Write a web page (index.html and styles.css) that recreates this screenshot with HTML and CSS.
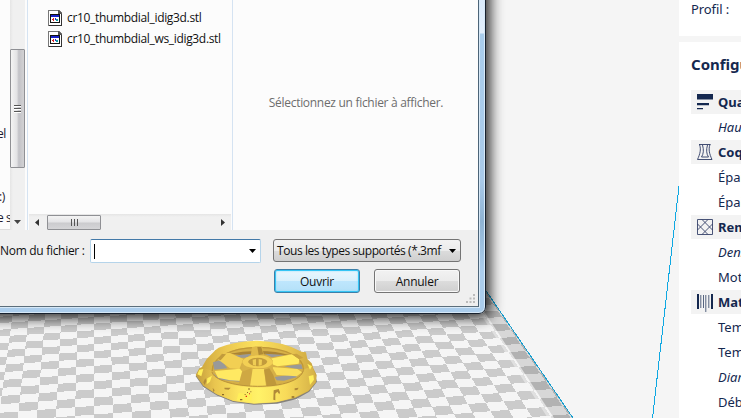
FILE: index.html
```html
<!DOCTYPE html>
<html lang="fr">
<head>
    <meta charset="UTF-8">
    <meta name="viewport" content="width=device-width, initial-scale=1">
    <title>Ouvrir un fichier</title>
    <link rel="stylesheet" href="styles.css">
</head>
<body>

<div class="workspace">
    <svg class="scene" width="741" height="418" viewBox="0 0 741 418">
        <defs>
            <linearGradient id="rim" x1="0" x2="1" y1="0" y2="0">
                <stop offset="0" stop-color="#c9a23b"/>
                <stop offset=".25" stop-color="#ecc850"/>
                <stop offset=".5" stop-color="#fbe15d"/>
                <stop offset=".8" stop-color="#e6c24e"/>
                <stop offset="1" stop-color="#c7a23d"/>
            </linearGradient>
            <linearGradient id="skirt" x1="0" x2="1" y1="0" y2="0">
                <stop offset="0" stop-color="#c59e3c"/>
                <stop offset=".15" stop-color="#e9c54f"/>
                <stop offset=".35" stop-color="#fce45f"/>
                <stop offset=".52" stop-color="#fff268"/>
                <stop offset=".75" stop-color="#f8da59"/>
                <stop offset="1" stop-color="#d4b047"/>
            </linearGradient>
        </defs>
        <path id="tiles" fill="#cbcbcb" shape-rendering="crispEdges"/>
        <path id="margin" fill="#000" fill-opacity=".12"/>
        <path id="marginSoft" fill="#f5f5f5" fill-opacity=".5"/>
        <path id="edge" stroke="#189fd0" fill="none" shape-rendering="crispEdges"/>
        <path d="M679 186L652.5 418" stroke="#0fa8e2" fill="none" shape-rendering="crispEdges"/>

        <!-- thumb dial -->
        <g transform="translate(180 325) scale(.33333)">
            <path d="M47 154L70 186 110 211 160 231 222 239 292 236 348 223 388 200 411 170 405 150 60 140z" fill="#85827c"/>
            <path fill="url(#rim)" d="M47 150L58 130 66 126 80 102 106 76 116 68Q160 50 232 47Q310 49 365 80L378 82 382 102 395 115 400 130 410 150 408 172 386 198 346 218 290 232 222 236 160 228 110 208 70 182z"/>
            <path fill="#d6b047" d="M96 140C92 98 150 66 235 66C325 68 374 101 371 136C366 163 310 184 232 184C156 183 101 163 96 140z"/>
            <path fill="none" stroke="#c09838" stroke-width="4" d="M97 138C95 100 150 68 235 67C325 68 372 101 370 134"/>
            <path fill="#a98334" d="M150 86Q190 78 235 78Q290 78 330 91L300 90 235 87 180 90z"/>
            <path fill="#999" d="M99 112L124 104 142 130 103 134zM158 92L215 86 200 98 182 98zM254 86L314 90 275 97zM312 124L364 118 368 132 345 131zM284 156L340 148 352 156 312 167 290 166zM98 142L108 156 122 164 136 166 180 170 176 162 112 156z"/>
            <path fill="#e0ba4a" d="M216 66L246 64 252 92 212 94z"/>
            <path fill="#b18b35" d="M232 66L244 66 250 88 236 90z"/>
            <path fill="#f2cf53" d="M126 86L148 83 190 102 178 132 150 130 112 102z"/>
            <path fill="#c29b3c" d="M126 86L138 88 122 106 112 102z"/>
            <path fill="#ffea61" d="M270 101L336 88 358 103 356 116 292 124 276 118z"/>
            <path fill="#c9a23f" d="M336 88L358 103 370 98 350 86z"/>
            <path fill="#ffe962" d="M104 138L180 131 192 146 184 168 150 166 114 158z"/>
            <path fill="#fbdf5c" d="M276 126L352 132 366 142 350 154 290 150z"/>
            <path fill="#d8b248" d="M188 105Q198 92 233 91Q268 92 278 106L279 138 266 150 200 150 186 138z"/>
            <path fill="#f3d054" d="M187 112Q190 92 233 91Q275 92 279 114Q270 130 233 130Q193 129 187 112z"/>
            <path fill="#c29b3c" d="M204 111Q208 99 233 98Q258 99 262 110Q256 123 233 124Q212 123 204 111z"/>
            <path fill="#efcd54" d="M218 104L228 102 228 122 219 120zM236 102L246 104 245 121 236 122z"/>
            <path fill="#cfa843" d="M186 140L214 130 218 154 212 182 176 178z"/>
            <path fill="#f9de5c" d="M218 132L252 132 258 184 210 184z"/>
            <path fill="#bf983b" d="M252 134L268 130 280 150 290 180 260 183z"/>
            <path fill="url(#skirt)" d="M50 150L66 128 92 136C98 164 156 187 232 188C316 187 366 165 374 132L396 124 408 154 407 172 384 198 344 217 290 231 222 235 160 227 110 207 70 181z"/>
            <path fill="none" stroke="#b8923a" stroke-width="3" d="M96 141C101 163 156 183 232 184C310 184 362 166 370 136"/>
            <path fill="#ffef5a" d="M58 134L70 132 64 154 52 148zM82 160L96 152 90 170 80 178zM386 154L400 150 402 164 390 180zM382 116L396 124 390 134zM176 204L216 208 214 230 170 226z"/>
            <path fill="#b18a38" d="M133 188L152 188 146 194 134 193zM281 196L296 192 300 202 298 208 292 200 286 206 286 226 280 224zM344 190L356 188 352 195 344 196zM70 172L76 160 79 168 74 180zM98 188L104 196 100 202z"/>
            <path fill="#8d6927" d="M205 190h4v4h-4zM201 201h3v3h-3zM211 199h3v3h-3zM194 207h3v3h-3zM126 207h6v4h-6zM180 222h7v4h-7zM335 214h8v4h-8z"/>
            <path fill="#e22518" d="M197 212h4v4h-4zM207 205h3v3h-3z"/>
        </g>
    </svg>

    <aside class="settings">
        <section class="profile">Profil :</section>
        <section class="config">
            <h2>Configuration</h2>
            <div class="row group">
                <svg width="16" height="16" viewBox="0 0 16 16" fill="#14284f"><path d="M0 0h16v5.500H0zM0 9h12v2.300H0zM0 14h6v1.300H0z"/></svg>
                Qualité
            </div>
            <div class="row changed">Hauteur</div>
            <div class="row group">
                <svg width="16" height="16" viewBox="0 0 16 16" fill="none" stroke="#2c3a63"><path d="M2 .5h11.500M.5 15.500h14.500M2.500 .5c1.800 5 .5 9.500-2 15M13 .5c-1.800 5-.5 9.500 2 15M5.500 1c1.500 5 1 9-1 12h7c-2-3-2.500-7-1-12" stroke-width=".9"/></svg>
                Coque
            </div>
            <div class="row">Épaisseur</div>
            <div class="row">Épaisseur</div>
            <div class="row group">
                <svg width="16" height="16" viewBox="0 0 16 16" fill="none" stroke="#35426a"><path d="M.5 .5h15v15H.5zM5 .5l10.500 10.500M.5 5L11 15.500M11 .5L.5 11M15.500 5L5 15.500" stroke-width=".9"/></svg>
                Remplissage
            </div>
            <div class="row changed">Densité</div>
            <div class="row">Motif</div>
            <div class="row group">
                <svg width="16" height="19" viewBox="0 0 16 19" fill="#14284f"><path d="M0 1h2v15H0zM14 1h2v15h-2z"/><path opacity=".7" d="M3.300 2h1v13h-1zM6 2h1v13H6zM8.300 2h1v17h-1zM11.300 2h1v13h-1z"/></svg>
                Matériau
            </div>
            <div class="row">Température</div>
            <div class="row">Température</div>
            <div class="row changed">Diamètre</div>
            <div class="row">Débit</div>
        </section>
    </aside>
</div>

<div class="dialog">
    <div class="dialog-body">
        <div class="browser">
            <div class="tree">
                <span class="tree-a">el</span>
                <span class="tree-b">:)</span>
                <span class="tree-c">e s</span>
            </div>
            <div class="vscroll">
                <div class="vthumb"><i></i><i></i><i></i></div>
                <svg width="7" height="4" viewBox="0 0 7 4"><path d="M0 0h7L3.500 4z" fill="#444"/></svg>
            </div>
            <div class="files">
                <ul>
                    <li><svg class="file-icon" width="14" height="16" viewBox="0 0 14 16" shape-rendering="crispEdges"><use href="#stl"/></svg><span>cr10_thumbdial_idig3d.stl</span></li>
                    <li><svg class="file-icon" width="14" height="16" viewBox="0 0 14 16" shape-rendering="crispEdges"><use href="#stl"/></svg><span>cr10_thumbdial_ws_idig3d.stl</span></li>
                </ul>
                <div class="hscroll">
                    <svg width="4" height="7" viewBox="0 0 4 7"><path d="M4 0v7L0 3.500z" fill="#333"/></svg>
                    <div class="hthumb"><i></i><i></i><i></i></div>
                    <svg class="end" width="4" height="7" viewBox="0 0 4 7"><path d="M0 0v7L4 3.500z" fill="#333"/></svg>
                </div>
            </div>
            <div class="preview">Sélectionnez un fichier à afficher.</div>
        </div>
        <div class="form">
            <div class="line">
                <label>Nom du fichier :</label>
                <div class="combo"><span class="caret"></span><svg width="7" height="4" viewBox="0 0 7 4"><path d="M0 0h7L3.500 4z"/></svg></div>
                <div class="select"><span>Tous les types supportés (*.3mf</span><svg width="7" height="4" viewBox="0 0 7 4"><path d="M0 0h7L3.500 4z"/></svg></div>
            </div>
            <div class="buttons">
                <button class="btn primary">Ouvrir</button>
                <button class="btn">Annuler</button>
            </div>
            <svg class="grip" width="9" height="9" viewBox="0 0 9 9" fill="#bbb"><path d="M7 0h2v2H7zM3.500 3.500h2v2h-2zM7 3.500h2v2H7zM0 7h2v2H0zM3.500 7h2v2h-2zM7 7h2v2H7z"/></svg>
        </div>
    </div>
</div>

<svg class="symbols" width="0" height="0">
    <symbol id="stl" viewBox="0 0 14 16">
        <path d="M0 0h11l3 3v13H0z" fill="#777"/>
        <path d="M1 1h9v3h3v11H1z" fill="#fff"/>
        <path d="M10 0v4h4v-1z" fill="#555"/>
        <path d="M13 4h1v12H1v-1h12z" fill="#333"/>
        <path d="M2 4h10v9H2z" fill="#111"/>
        <path d="M3 5h8v2H3z" fill="#1a22c8"/>
        <path d="M3 7h8v5H3z" fill="#fff"/>
        <path d="M4 9h2v1H4zM5 8h1v3H5z" fill="#d22"/>
        <path d="M7 8h1v2H7z" fill="#2424d0"/>
        <path d="M8 9h2v2H8z" fill="#13a0a8"/>
    </symbol>
</svg>

<script src="script.js"></script>
</body>
</html>
```
FILE: styles.css
```css
body {
    margin: 0;
    width: 741px;
    height: 418px;
    overflow: hidden;
    position: relative;
    background: #f5f5f5;
    font-family: "Noto Sans", "Open Sans", sans-serif;
}
.workspace {
    display: flex;
    justify-content: flex-end;
    height: 418px;
}
.scene {
    position: absolute;
    left: 0;
    top: 0;
}
.symbols {
    position: absolute;
}

/* settings panel */
.settings {
    width: 62px;
    overflow: hidden;
    color: #14284f;
    font-size: 13px;
    white-space: nowrap;
    position: relative;
}
.profile {
    height: 36px;
    box-sizing: border-box;
    padding: 0 0 0 12px;
    line-height: 18px;
    letter-spacing: -.1px;
    background: #fff;
    margin-bottom: 6px;
}
.config {
    background: #fff;
    height: 376px;
    padding-left: 12px;
}
.config h2 {
    margin: 0;
    height: 48px;
    line-height: 45px;
    font-size: 15px;
    font-weight: bold;
}
.row {
    height: 24px;
    line-height: 25px;
    margin-bottom: 1px;
    padding-left: 27px;
}
.group {
    display: flex;
    align-items: center;
    background: #f3f3f3;
    padding-left: 6px;
    gap: 5px;
    font-weight: bold;
}
.group svg {
    flex: none;
}
.changed {
    font-style: italic;
}

/* file dialog */
.dialog {
    position: absolute;
    left: -20px;
    top: -20px;
    width: 506px;
    height: 334px;
    box-sizing: border-box;
    padding: 0 6px 6px 0;
    border: 1px solid #17212e;
    border-radius: 0 0 7px 7px;
    background: linear-gradient(#d4e8fb 0, #e2effc 52px, #a9cdec 53px, #a9cae9 200px, #8fb3d3 240px, #abcdec 290px);
    box-shadow: inset 0 0 0 1px #d6e8f7, 3px 3px 14px 1px rgba(0, 0, 0, .85);
    font-family: "Open Sans", "Noto Sans", sans-serif;
    font-size: 12px;
    color: #111;
}
.dialog-body {
    height: 326px;
    box-sizing: border-box;
    padding: 19px 0 0 19px;
    border-right: 1px solid #4c6478;
    border-bottom: 1px solid #5c6e7b;
    box-shadow: 1px 1px 0 #d6e8f7;
    background: #efefef;
}
.browser {
    display: flex;
    height: 230px;
    background: #fcfcfc;
}
.tree {
    width: 10px;
    height: 229px;
    overflow: hidden;
    display: flex;
    flex-direction: column;
    line-height: 16px;
    white-space: nowrap;
    color: #1a1a30;
    letter-spacing: -.4px;
    border-bottom: 1px solid #ddd;
}
.tree-a {
    margin: 126px 0 47px -3px;
}
.tree-b {
    margin: 0 0 5px -1px;
}
.tree-c {
    margin-left: -3px;
}
.vscroll {
    width: 15px;
    padding-top: 49px;
    background: linear-gradient(90deg, #e5e5e5, #f0f0f0 3px);
    display: flex;
    flex-direction: column;
    align-items: center;
    gap: 52px;
}
.vthumb {
    width: 13px;
    height: 117px;
    border: 1px solid #8f9094;
    border-radius: 1px;
    background: linear-gradient(90deg, #f4f4f4, #e2e2e4 45%, #c2c2c7 60%, #d2d2d4);
    display: flex;
    flex-direction: column;
    justify-content: center;
    align-items: center;
    gap: 2px;
}
.vthumb i {
    width: 7px;
    height: 1px;
    background: #555;
    border-bottom: 1px solid #fff;
    margin-bottom: -1px;
}
.files {
    width: 204px;
    margin-left: 2px;
    border-left: 1px solid #d5e3f2;
    border-right: 1px solid #d5e3f2;
    display: flex;
    flex-direction: column;
    justify-content: space-between;
}
.files ul {
    list-style: none;
    margin: 0;
    padding: 7px 0 0 20px;
}
.files li {
    display: flex;
    align-items: center;
    height: 21px;
    gap: 5px;
    white-space: nowrap;
    letter-spacing: -.33px;
}
.file-icon {
    flex: none;
}
.hscroll {
    display: flex;
    align-items: center;
    height: 16px;
    margin: 0 1px;
    padding: 0 6px;
    background: linear-gradient(#e5e5e5, #f0f0f0 3px);
}
.hthumb {
    width: 52px;
    height: 13px;
    margin-left: 8px;
    border: 1px solid #8f9094;
    border-radius: 1px;
    background: linear-gradient(#f4f4f4, #e4e4e6 45%, #cbcbce 55%, #d5d5d7);
    display: flex;
    align-items: center;
    justify-content: center;
    gap: 2px;
}
.hthumb i {
    width: 1px;
    height: 7px;
    background: #555;
}
.end {
    margin-left: auto;
}
.preview {
    flex: 1;
    padding: 95px 0 0 1px;
    line-height: 16px;
    text-align: center;
    color: #6d6d6d;
    letter-spacing: -.3px;
    white-space: nowrap;
}
.form {
    height: 75px;
    position: relative;
}
.line {
    display: flex;
    padding-top: 9px;
    height: 24px;
}
.line label {
    width: 90px;
    line-height: 24px;
    letter-spacing: -.3px;
    white-space: nowrap;
}
.combo,
.select {
    display: flex;
    align-items: center;
    justify-content: space-between;
    box-sizing: border-box;
    height: 24px;
    padding: 0 4px 0 3px;
}
.combo {
    width: 171px;
    margin-right: 12px;
    background: #fff;
    border: 1px solid #b5d4ea;
    border-top-color: #4379a8;
    border-radius: 2px;
}
.caret {
    width: 1px;
    height: 15px;
    background: #000;
}
.select {
    width: 188px;
    height: 23px;
    border: 1px solid #747474;
    border-radius: 3px;
    background: linear-gradient(#f2f2f2, #ebebeb 50%, #dcdcdc 52%, #cfcfcf);
    letter-spacing: -.42px;
    white-space: nowrap;
}
.buttons {
    display: flex;
    gap: 14px;
    padding: 6px 0 0 274px;
}
.btn {
    width: 86px;
    height: 24px;
    padding: 0;
    border: 1px solid #747474;
    border-radius: 3px;
    box-shadow: inset 0 0 0 1px #f8f8f8;
    background: linear-gradient(#f2f2f2, #ebebeb 50%, #dcdcdc 52%, #cfcfcf);
    font: inherit;
    letter-spacing: -.25px;
    color: #111;
}
.primary {
    border-color: #3c7fa8;
    box-shadow: inset 0 0 0 1px #35c5f5, inset 0 0 2px 1px #8fdcfa;
    background: linear-gradient(#eaf6fd, #d9f0fc 50%, #bee6fd 52%, #b4e0f8);
}
.grip {
    position: absolute;
    right: 3px;
    bottom: 2px;
}
```
FILE: script.js
```javascript
// perspective floor: columns converge on (VX, VY)
const VX = 94, VY = -283;
const COL = 0.0272, TILT = 0.000106;

function point(u, k) {
    const a = 0.0015947 - 0.0000179 * k;
    const y = 1 / (a + TILT * COL * u);
    return (VX + COL * u * y).toFixed(2) + ' ' + (VY + y).toFixed(2);
}

function quad(u1, u2, k1, k2) {
    return 'M' + [point(u1, k1), point(u2, k1), point(u2, k2), point(u1, k2)].join('L') + 'z';
}

const EDGE = 25.12;
let d = '';
for (let u = -8; u < EDGE; u++) {
    for (let k = -12; k < 32; k++) {
        if ((u + k) % 2 === 0) continue;
        d += quad(u, Math.min(u + 1, EDGE), k, k + 1);
    }
}
document.getElementById('tiles').setAttribute('d', d);
document.getElementById('margin').setAttribute('d', quad(24.12, EDGE, -12, 32));
document.getElementById('marginSoft').setAttribute('d', quad(23.8, 24.12, -12, 32));
document.getElementById('edge').setAttribute('d', 'M' + point(EDGE, -12) + 'L' + point(EDGE, 32));
```
